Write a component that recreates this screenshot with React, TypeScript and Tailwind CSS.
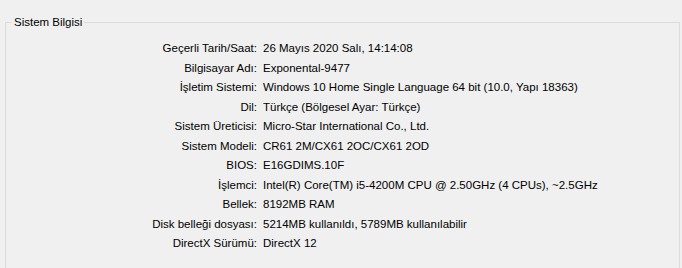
import React from "react";

const rows: [string, string][] = [
  ["Geçerli Tarih/Saat:", "26 Mayıs 2020 Salı, 14:14:08"],
  ["Bilgisayar Adı:", "Exponental-9477"],
  ["İşletim Sistemi:", "Windows 10 Home Single Language 64 bit (10.0, Yapı 18363)"],
  ["Dil:", "Türkçe (Bölgesel Ayar: Türkçe)"],
  ["Sistem Üreticisi:", "Micro-Star International Co., Ltd."],
  ["Sistem Modeli:", "CR61 2M/CX61 2OC/CX61 2OD"],
  ["BIOS:", "E16GDIMS.10F"],
  ["İşlemci:", "Intel(R) Core(TM) i5-4200M CPU @ 2.50GHz (4 CPUs), ~2.5GHz"],
  ["Bellek:", "8192MB RAM"],
  ["Disk belleği dosyası:", "5214MB kullanıldı, 5789MB kullanılabilir"],
  ["DirectX Sürümü:", "DirectX 12"],
];

export default function App() {
  return (
    <div
      className="w-[682px] h-[268px] overflow-hidden bg-[#f0f0f0] text-black text-[11.5px]"
      style={{ fontFamily: '"Liberation Sans", Arial, sans-serif' }}
    >
      <div className="pt-[22px] pl-[5px] pr-[2px]">
        <div className="relative border border-[#dcdcdc] border-b-0 h-[260px] pt-[18px]">
          <div className="absolute left-[6px] top-[-8px] px-[2px] bg-[#f0f0f0] leading-[14px]">
            Sistem Bilgisi
          </div>
          <div className="grid grid-cols-[251px_1fr] gap-x-[6px] gap-y-[5.5px] leading-[14px]">
            {rows.map(([k, v]) => (
              <React.Fragment key={k}>
                <div className="text-right whitespace-nowrap">{k}</div>
                <div className="whitespace-nowrap">{v}</div>
              </React.Fragment>
            ))}
          </div>
        </div>
      </div>
    </div>
  );
}
